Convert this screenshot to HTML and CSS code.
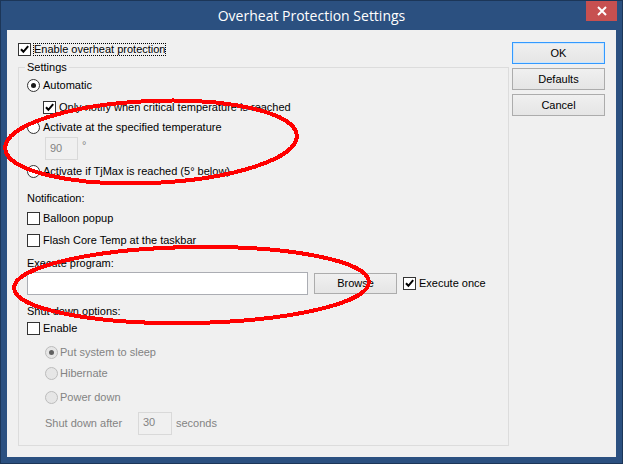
FILE: index.html
```html
<!DOCTYPE html>
<html>
<head>
<meta charset="utf-8">
<title>Overheat Protection Settings</title>
<link rel="stylesheet" href="styles.css">
</head>
<body>
<div class="window">
  <div class="titlebar">
    <div class="title">Overheat Protection Settings</div>
    <div class="close-wrap">
      <div class="close">
        <svg width="10" height="10" viewBox="0 0 10 10"><path d="M1 1 L9 9 M9 1 L1 9" stroke="#fff" stroke-width="2" fill="none"/></svg>
      </div>
    </div>
  </div>
  <div class="client">
    <div class="main">
      <div class="row top-row">
        <span class="cb"><svg viewBox="0 0 11 11"><path d="M2 5.2 L4.4 7.8 L9.2 2.2" class="tick"/></svg></span>
        <span class="focus">Enable overheat protection</span>
      </div>
      <div class="group">
        <div class="group-title">Settings</div>
        <div class="row r-auto"><span class="rb on"></span><span class="lbl">Automatic</span></div>
        <div class="row r-notify ind16"><span class="cb"><svg viewBox="0 0 11 11"><path d="M2 5.2 L4.4 7.8 L9.2 2.2" class="tick"/></svg></span><span class="lbl">Only notify when critical temperature is reached</span></div>
        <div class="row r-spec"><span class="rb"></span><span class="lbl">Activate at the specified temperature</span></div>
        <div class="row tall r-temp ind18"><span class="field dis small">90</span><span class="deg dis-text">°</span></div>
        <div class="row r-tj"><span class="rb"></span><span class="lbl">Activate if TjMax is reached (5° below)</span></div>
        <div class="row r-notif"><span class="plain">Notification:</span></div>
        <div class="row r-balloon"><span class="cb"></span><span class="lbl">Balloon popup</span></div>
        <div class="row r-flash"><span class="cb"></span><span class="lbl">Flash Core Temp at the taskbar</span></div>
        <div class="row r-exec"><span class="plain">Execute program:</span></div>
        <div class="row tall r-input">
          <span class="field wide"></span>
          <span class="btn browse">Browse</span>
          <span class="cb"><svg viewBox="0 0 11 11"><path d="M2 5.2 L4.4 7.8 L9.2 2.2" class="tick"/></svg></span><span class="lbl">Execute once</span>
        </div>
        <div class="row r-shut"><span class="plain">Shut down options:</span></div>
        <div class="row r-enable"><span class="cb"></span><span class="lbl">Enable</span></div>
        <div class="row r-sleep ind18"><span class="rb on disabled"></span><span class="lbl2 dis-text">Put system to sleep</span></div>
        <div class="row r-hib ind18"><span class="rb disabled"></span><span class="lbl2 dis-text">Hibernate</span></div>
        <div class="row r-power ind18"><span class="rb disabled"></span><span class="lbl2 dis-text">Power down</span></div>
        <div class="row tall r-after ind18"><span class="after-lbl dis-text">Shut down after</span><span class="field dis secs">30</span><span class="secs-lbl dis-text">seconds</span></div>
      </div>
    </div>
    <div class="buttons">
      <div class="btn default">OK</div>
      <div class="btn">Defaults</div>
      <div class="btn">Cancel</div>
    </div>
  </div>
  <svg class="marks" width="623" height="464" viewBox="0 0 623 464" shape-rendering="crispEdges">
    <ellipse cx="151" cy="142" rx="146" ry="41" transform="rotate(-2.5 151 142)" fill="none" stroke="#ff0000" stroke-width="4"/>
    <ellipse cx="191.5" cy="285" rx="177.5" ry="38" transform="rotate(-1 191.5 285)" fill="none" stroke="#ff0000" stroke-width="4"/>
  </svg>
</div>
</body>
</html>
```
FILE: styles.css
```css
html, body {
  margin: 0;
  padding: 0;
  background: #2b5080;
}
body {
  font-family: "Liberation Sans", Arial, sans-serif;
  font-size: 11px;
  color: #000;
}
.window {
  position: relative;
  width: 623px;
  height: 464px;
  box-sizing: border-box;
  border: 1px solid #1c3658;
  background: #2b5080;
  overflow: hidden;
}
.titlebar {
  height: 29px;
  display: grid;
  grid-template-columns: 1fr auto 1fr;
}
.title {
  grid-column: 2;
  font-family: "Open Sans", "Noto Sans", sans-serif;
  font-size: 14px;
  line-height: 29px;
  color: #fff;
  white-space: nowrap;
}
.close-wrap {
  grid-column: 3;
  display: flex;
  justify-content: flex-end;
  align-items: flex-start;
}
.close {
  width: 31px;
  height: 21px;
  margin-top: -1px;
  margin-right: 5px;
  background: #c75050;
  display: flex;
  align-items: center;
  justify-content: center;
}
.close svg { display: block; }
.client {
  margin: 0 6px;
  height: 427px;
  background: #f0f0f0;
  display: flex;
  padding: 12px 0 0 11px;
  box-sizing: border-box;
}
.main {
  width: 491px;
  flex: none;
}
.buttons {
  margin-left: 3px;
  display: flex;
  flex-direction: column;
  gap: 4px;
}
.btn {
  width: 93px;
  height: 22px;
  box-sizing: border-box;
  border: 1px solid #acacac;
  background: linear-gradient(#f0f0f0, #e5e5e5);
  display: flex;
  align-items: center;
  justify-content: center;
  line-height: 13px;
}
.btn.default {
  border-color: #3399ff;
  box-shadow: inset 0 0 0 1px #cde6fb;
}
.row {
  display: flex;
  align-items: center;
  height: 13px;
  line-height: 13px;
  white-space: nowrap;
}
.row.tall { height: 23px; }
.ind16 { padding-left: 16px; }
.ind18 { padding-left: 18px; }
.top-row { margin-top: 1px; }
.cb {
  width: 13px;
  height: 13px;
  box-sizing: border-box;
  border: 1px solid #333;
  background: #fff;
  flex: none;
  display: block;
}
.cb svg { display: block; width: 11px; height: 11px; }
.tick {
  fill: none;
  stroke: #000;
  stroke-width: 2;
}
.top-row .cb { margin-right: 2px; }
.focus {
  border: 1px dotted #000;
  height: 13px;
  box-sizing: border-box;
  line-height: 11px;
}
.lbl { margin-left: 3px; }
.lbl2 { margin-left: 2px; }
.rb {
  width: 13px;
  height: 13px;
  box-sizing: border-box;
  border: 1px solid #333;
  border-radius: 50%;
  background: #fff;
  flex: none;
  position: relative;
}
.rb.on::after {
  content: "";
  position: absolute;
  left: 3px;
  top: 3px;
  width: 5px;
  height: 5px;
  border-radius: 50%;
  background: #1a1a1a;
}
.rb.disabled {
  border-color: #bcbcbc;
  background: #e6e6e6;
}
.rb.disabled.on::after { background: #606060; }
.dis-text { color: #838383; }
.group {
  margin-top: 11px;
  height: 379px;
  box-sizing: border-box;
  border: 1px solid #dcdcdc;
  padding-left: 8px;
}
.group-title {
  margin: -8px 0 0 -2px;
  padding: 0 2px;
  width: fit-content;
  line-height: 14px;
  background: #f0f0f0;
}
.r-auto { margin-top: 5px; }
.r-notify { margin-top: 9px; }
.r-spec { margin-top: 7px; }
.r-temp { margin-top: 3px; }
.r-tj { margin-top: 5px; }
.r-notif { margin-top: 14px; }
.r-balloon { margin-top: 7px; }
.r-flash { margin-top: 9px; }
.r-exec { margin-top: 10px; }
.r-input { margin-top: 2px; }
.r-shut { margin-top: 10px; }
.r-enable { margin-top: 4px; }
.r-sleep { margin-top: 11px; }
.r-hib { margin-top: 8px; }
.r-power { margin-top: 11px; }
.r-after { margin-top: 8px; }
.field {
  height: 23px;
  box-sizing: border-box;
  border: 1px solid #abadb3;
  background: #fff;
  padding: 4px 0 0 4px;
  line-height: 13px;
  flex: none;
}
.field.dis {
  border-color: #d9d9d9;
  background: #f0f0f0;
  color: #838383;
}
.field.small { width: 33px; }
.field.wide { width: 281px; }
.field.secs { width: 34px; padding-top: 3px; }
.deg { margin-left: 4px; align-self: flex-start; margin-top: 2px; }
.browse {
  width: 83px;
  height: 21px;
  margin-left: 6px;
  margin-right: 6px;
}
.after-lbl { width: 93px; }
.secs-lbl { margin-left: 4px; }
.marks {
  position: absolute;
  left: -1px;
  top: -1px;
  pointer-events: none;
}
```
